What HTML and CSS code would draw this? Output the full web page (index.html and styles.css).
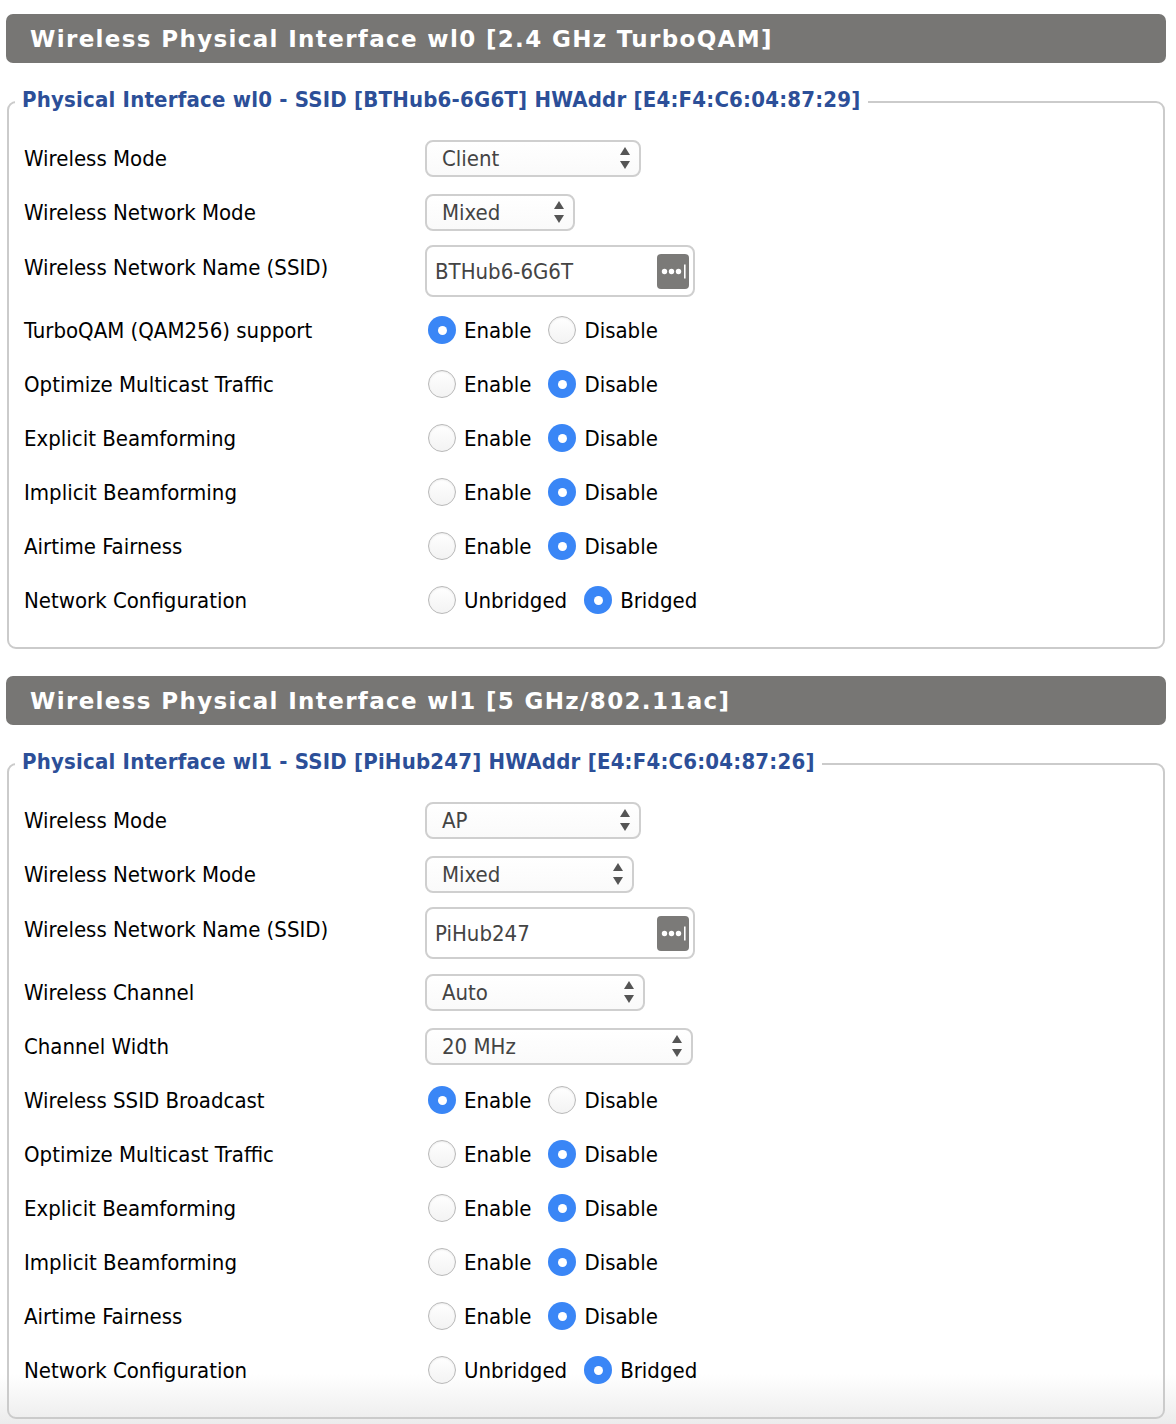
FILE: index.html
```html
<!DOCTYPE html>
<html lang="en">
<head>
<meta charset="utf-8">
<title>Wireless Physical Interfaces</title>
<link rel="stylesheet" href="styles.css">
</head>
<body>
<div class="page">
  <h2 class="bar">Wireless Physical Interface wl0 [2.4 GHz TurboQAM]</h2>
  <fieldset class="box">
    <legend>Physical Interface wl0 - SSID [BTHub6-6G6T] HWAddr [E4:F4:C6:04:87:29]</legend>
    <div class="row"><div class="lbl">Wireless Mode</div><div class="val"><div class="sel w216"><span>Client</span><svg class="arr" width="12" height="24" viewBox="0 0 12 24"><path d="M6 1 L11 9 L1 9 Z M6 23 L11 15 L1 15 Z" fill="#555"/></svg></div></div></div>
    <div class="row"><div class="lbl">Wireless Network Mode</div><div class="val"><div class="sel w150"><span>Mixed</span><svg class="arr" width="12" height="24" viewBox="0 0 12 24"><path d="M6 1 L11 9 L1 9 Z M6 23 L11 15 L1 15 Z" fill="#555"/></svg></div></div></div>
    <div class="row tall"><div class="lbl up">Wireless Network Name (SSID)</div><div class="val"><div class="txt"><span>BTHub6-6G6T</span><svg class="key" width="32" height="35" viewBox="0 0 32 35"><rect width="32" height="35" rx="4" fill="#7b7a78"/><circle cx="7.5" cy="17.5" r="2.7" fill="#fff"/><circle cx="14.5" cy="17.5" r="2.7" fill="#fff"/><circle cx="21.5" cy="17.5" r="2.7" fill="#fff"/><rect x="27" y="10.5" width="1.6" height="14" fill="#fff"/></svg></div></div></div>
    <div class="row"><div class="lbl">TurboQAM (QAM256) support</div><div class="val"><span class="opt"><i class="rd on"></i>Enable</span><span class="opt"><i class="rd"></i>Disable</span></div></div>
    <div class="row"><div class="lbl">Optimize Multicast Traffic</div><div class="val"><span class="opt"><i class="rd"></i>Enable</span><span class="opt"><i class="rd on"></i>Disable</span></div></div>
    <div class="row"><div class="lbl">Explicit Beamforming</div><div class="val"><span class="opt"><i class="rd"></i>Enable</span><span class="opt"><i class="rd on"></i>Disable</span></div></div>
    <div class="row"><div class="lbl">Implicit Beamforming</div><div class="val"><span class="opt"><i class="rd"></i>Enable</span><span class="opt"><i class="rd on"></i>Disable</span></div></div>
    <div class="row"><div class="lbl">Airtime Fairness</div><div class="val"><span class="opt"><i class="rd"></i>Enable</span><span class="opt"><i class="rd on"></i>Disable</span></div></div>
    <div class="row"><div class="lbl">Network Configuration</div><div class="val"><span class="opt"><i class="rd"></i>Unbridged</span><span class="opt"><i class="rd on"></i>Bridged</span></div></div>
  </fieldset>

  <h2 class="bar second">Wireless Physical Interface wl1 [5 GHz/802.11ac]</h2>
  <fieldset class="box">
    <legend>Physical Interface wl1 - SSID [PiHub247] HWAddr [E4:F4:C6:04:87:26]</legend>
    <div class="row"><div class="lbl">Wireless Mode</div><div class="val"><div class="sel w216"><span>AP</span><svg class="arr" width="12" height="24" viewBox="0 0 12 24"><path d="M6 1 L11 9 L1 9 Z M6 23 L11 15 L1 15 Z" fill="#555"/></svg></div></div></div>
    <div class="row"><div class="lbl">Wireless Network Mode</div><div class="val"><div class="sel w209"><span>Mixed</span><svg class="arr" width="12" height="24" viewBox="0 0 12 24"><path d="M6 1 L11 9 L1 9 Z M6 23 L11 15 L1 15 Z" fill="#555"/></svg></div></div></div>
    <div class="row tall"><div class="lbl up">Wireless Network Name (SSID)</div><div class="val"><div class="txt"><span>PiHub247</span><svg class="key" width="32" height="35" viewBox="0 0 32 35"><rect width="32" height="35" rx="4" fill="#7b7a78"/><circle cx="7.5" cy="17.5" r="2.7" fill="#fff"/><circle cx="14.5" cy="17.5" r="2.7" fill="#fff"/><circle cx="21.5" cy="17.5" r="2.7" fill="#fff"/><rect x="27" y="10.5" width="1.6" height="14" fill="#fff"/></svg></div></div></div>
    <div class="row"><div class="lbl">Wireless Channel</div><div class="val"><div class="sel w220"><span>Auto</span><svg class="arr" width="12" height="24" viewBox="0 0 12 24"><path d="M6 1 L11 9 L1 9 Z M6 23 L11 15 L1 15 Z" fill="#555"/></svg></div></div></div>
    <div class="row"><div class="lbl">Channel Width</div><div class="val"><div class="sel w268"><span>20 MHz</span><svg class="arr" width="12" height="24" viewBox="0 0 12 24"><path d="M6 1 L11 9 L1 9 Z M6 23 L11 15 L1 15 Z" fill="#555"/></svg></div></div></div>
    <div class="row"><div class="lbl">Wireless SSID Broadcast</div><div class="val"><span class="opt"><i class="rd on"></i>Enable</span><span class="opt"><i class="rd"></i>Disable</span></div></div>
    <div class="row"><div class="lbl">Optimize Multicast Traffic</div><div class="val"><span class="opt"><i class="rd"></i>Enable</span><span class="opt"><i class="rd on"></i>Disable</span></div></div>
    <div class="row"><div class="lbl">Explicit Beamforming</div><div class="val"><span class="opt"><i class="rd"></i>Enable</span><span class="opt"><i class="rd on"></i>Disable</span></div></div>
    <div class="row"><div class="lbl">Implicit Beamforming</div><div class="val"><span class="opt"><i class="rd"></i>Enable</span><span class="opt"><i class="rd on"></i>Disable</span></div></div>
    <div class="row"><div class="lbl">Airtime Fairness</div><div class="val"><span class="opt"><i class="rd"></i>Enable</span><span class="opt"><i class="rd on"></i>Disable</span></div></div>
    <div class="row"><div class="lbl">Network Configuration</div><div class="val"><span class="opt"><i class="rd"></i>Unbridged</span><span class="opt"><i class="rd on"></i>Bridged</span></div></div>
  </fieldset>
</div>
</body>
</html>
```

FILE: styles.css
```css
html, body {
  margin: 0;
  padding: 0;
}
html {
  background: linear-gradient(to bottom, #fff 0, #fff calc(100% - 50px), #ececec 100%);
  min-height: 100%;
}
body {
  font-family: "DejaVu Sans Condensed", "DejaVu Sans", sans-serif;
  font-size: 22px;
  color: #000;
}
.page {
  padding: 14px 10px 4px 6px;
}
.bar {
  margin: 0;
  height: 49px;
  display: flex;
  align-items: center;
  padding-left: 24px;
  background: #777674;
  border-radius: 7px;
  color: #fff;
  font-family: "DejaVu Sans", sans-serif;
  font-weight: bold;
  font-size: 23px;
  letter-spacing: 1.35px;
}
.bar.second {
  margin-top: 27px;
}
.box {
  margin: 27px 1px 0 1px;
  padding: 17px 16px 20px 15px;
  border: 2px solid #cbcbcb;
  border-radius: 9px;
  min-width: 0;
}
.box legend {
  margin-left: -9px;
  padding: 0 7px 0 7px;
  color: #2c4f98;
  font-weight: bold;
  font-size: 22px;
  letter-spacing: 0.2px;
  line-height: 24px;
  position: relative;
  top: -2px;
}
.row {
  display: grid;
  grid-template-columns: 401px 1fr;
  align-items: center;
  height: 54px;
}
.row.tall {
  height: 64px;
}
.lbl.up {
  margin-top: -8px;
}
.val {
  display: flex;
  align-items: center;
}
.sel {
  box-sizing: border-box;
  height: 37px;
  border: 2px solid #cfcfcf;
  border-radius: 8px;
  background: linear-gradient(#fff, #fafafa);
  display: flex;
  align-items: center;
  justify-content: space-between;
  padding: 0 8px 0 15px;
  color: #444;
}
.w150 { width: 150px; }
.w209 { width: 209px; }
.w216 { width: 216px; }
.w220 { width: 220px; }
.w268 { width: 268px; }
.arr {
  display: block;
}
.txt {
  box-sizing: border-box;
  width: 270px;
  height: 52px;
  border: 2px solid #cfcfcf;
  border-radius: 8px;
  display: flex;
  align-items: center;
  justify-content: space-between;
  padding: 0 4px 0 8px;
  color: #444;
}
.key {
  display: block;
}
.opt {
  display: flex;
  align-items: center;
  margin-right: 14px;
}
.rd {
  box-sizing: border-box;
  width: 28px;
  height: 28px;
  border-radius: 50%;
  margin: 0 8px 0 3px;
  border: 1px solid #b9b9b9;
  background: linear-gradient(#fff, #f3f3f3);
  box-shadow: inset 0 1px 2px rgba(0,0,0,0.08);
  position: relative;
}
.rd.on {
  border: none;
  background: #3a86f6;
  box-shadow: none;
}
.rd.on::after {
  content: "";
  position: absolute;
  left: 50%;
  top: 50%;
  width: 9px;
  height: 9px;
  margin: -4.5px 0 0 -4.5px;
  border-radius: 50%;
  background: #fff;
}
```
